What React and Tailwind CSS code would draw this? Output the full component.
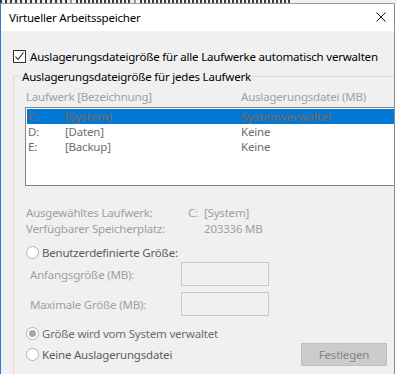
import React from "react";

function Radio({ checked }) {
  return (
    <span className="w-[13px] h-[13px] rounded-full border border-[#b3b3b3] bg-white flex items-center justify-center shrink-0">
      {checked && <span className="w-[7px] h-[7px] rounded-full bg-[#a6a6a6]" />}
    </span>
  );
}

export default function App() {
  return (
    <div className="w-[397px] h-[374px] overflow-hidden bg-white flex flex-col font-['Noto_Sans',sans-serif] text-[11.5px] tracking-[-0.2px] leading-[15px] text-black">
      <div className="h-[3px] flex bg-[#f0f0f0]">
        <div className="w-[68px] bg-[repeating-linear-gradient(90deg,#3a3a3a_0_2px,transparent_2px_5px)]" />
        <div className="w-[2px] bg-[#9a9a9a] ml-[2px]" />
        <div className="w-[56px] ml-[4px] bg-[repeating-linear-gradient(90deg,#3a3a3a_0_2px,transparent_2px_4px)]" />
        <div className="w-[2px] bg-[#9a9a9a] ml-[2px]" />
        <div className="w-[150px] ml-[4px] bg-[repeating-linear-gradient(90deg,#3a3a3a_0_2px,transparent_2px_4px)]" />
      </div>
      <div className="flex flex-1 min-h-0">
        <div className="w-[395px] flex flex-col border-l border-l-[#2b79d0] border-r border-r-[#8a8a8a] border-t border-t-[#9a9a9a] overflow-hidden">
          <div className="h-[27px] bg-white flex items-center justify-between pl-[8px] pr-[8px] shrink-0">
            <span>Virtueller Arbeitsspeicher</span>
            <svg width="10" height="10" viewBox="0 0 10 10" className="mt-[-2px]">
              <path d="M0.5 0.5 L9.5 9.5 M9.5 0.5 L0.5 9.5" stroke="#111" strokeWidth="1" fill="none" />
            </svg>
          </div>
          <div className="flex-1 bg-[#f0f0f0] pt-[18px] pl-[12px] overflow-hidden">
            <div className="flex items-center h-[15px]">
              <span className="w-[13px] h-[13px] border border-[#333333] bg-white flex items-center justify-center shrink-0">
                <svg width="11" height="11" viewBox="0 0 11 11">
                  <path d="M1.5 5.5 L4 8.5 L9.5 1.5" stroke="#222" strokeWidth="1.1" fill="none" />
                </svg>
              </span>
              <span className="ml-[4px] whitespace-nowrap">Auslagerungsdateigröße für alle Laufwerke automatisch verwalten</span>
            </div>
            <fieldset className="mt-[5px] w-[390px] border border-[#dcdcdc] p-0">
              <legend className="ml-[7px] px-[1px] whitespace-nowrap">Auslagerungsdateigröße für jedes Laufwerk</legend>
              <div className="pl-[11px] pt-[5px] pb-[20px]">
                <div className="flex pl-[1px] text-[#a0a0a0] whitespace-nowrap">
                  <span className="w-[215px]">Laufwerk [Bezeichnung]</span>
                  <span>Auslagerungsdatei (MB)</span>
                </div>
                <div className="mt-[3px] h-[79px] border border-[#828282] bg-white p-[1px]">
                  <div className="flex items-center pl-[1px] bg-[#0078d7] text-[#706868] font-semibold whitespace-nowrap h-[15px]">
                    <span className="w-[37px]">C:</span>
                    <span className="w-[176px]">[System]</span>
                    <span>Systemverwaltet</span>
                  </div>
                  <div className="flex items-center pl-[1px] text-[#6d6d6d] whitespace-nowrap h-[15px]">
                    <span className="w-[37px]">D:</span>
                    <span className="w-[176px]">[Daten]</span>
                    <span>Keine</span>
                  </div>
                  <div className="flex items-center pl-[1px] text-[#6d6d6d] whitespace-nowrap h-[15px]">
                    <span className="w-[37px]">E:</span>
                    <span className="w-[176px]">[Backup]</span>
                    <span>Keine</span>
                  </div>
                </div>
                <div className="mt-[19px] grid grid-cols-[162px_16px_auto] leading-[16px] text-[#a0a0a0] pl-[1px] whitespace-nowrap">
                  <span>Ausgewähltes Laufwerk:</span>
                  <span>C:</span>
                  <span>[System]</span>
                  <span>Verfügbarer Speicherplatz:</span>
                  <span />
                  <span>203336 MB</span>
                </div>
                <div className="mt-[7px] flex items-center h-[16px] pl-[1px]">
                  <Radio />
                  <span className="ml-[3px] text-[#5c5c5c] whitespace-nowrap">Benutzerdefinierte Größe:</span>
                </div>
                <div className="mt-[2px] flex items-center">
                  <span className="w-[156px] pl-[5px] text-[#a0a0a0] whitespace-nowrap">Anfangsgröße (MB):</span>
                  <span className="w-[88px] h-[24px] border border-[#c8c8c8] bg-[#f0f0f0]" />
                </div>
                <div className="mt-[6px] flex items-center">
                  <span className="w-[156px] pl-[5px] text-[#a0a0a0] whitespace-nowrap">Maximale Größe (MB):</span>
                  <span className="w-[88px] h-[24px] border border-[#c8c8c8] bg-[#f0f0f0]" />
                </div>
                <div className="mt-[9px] flex items-center h-[16px] pl-[1px]">
                  <Radio checked />
                  <span className="ml-[3px] text-[#6d6d6d] whitespace-nowrap">Größe wird vom System verwaltet</span>
                </div>
                <div className="mt-[1px] flex items-center h-[24px]">
                  <div className="w-[276px] flex items-center pl-[1px] shrink-0">
                    <Radio />
                    <span className="ml-[3px] text-[#5c5c5c] whitespace-nowrap">Keine Auslagerungsdatei</span>
                  </div>
                  <span className="w-[86px] h-[23px] border border-[#bfbfbf] bg-[#cccccc] text-[#858585] flex items-center justify-center">Festlegen</span>
                </div>
              </div>
            </fieldset>
          </div>
        </div>
        <div className="flex-1 bg-white" />
      </div>
    </div>
  );
}
